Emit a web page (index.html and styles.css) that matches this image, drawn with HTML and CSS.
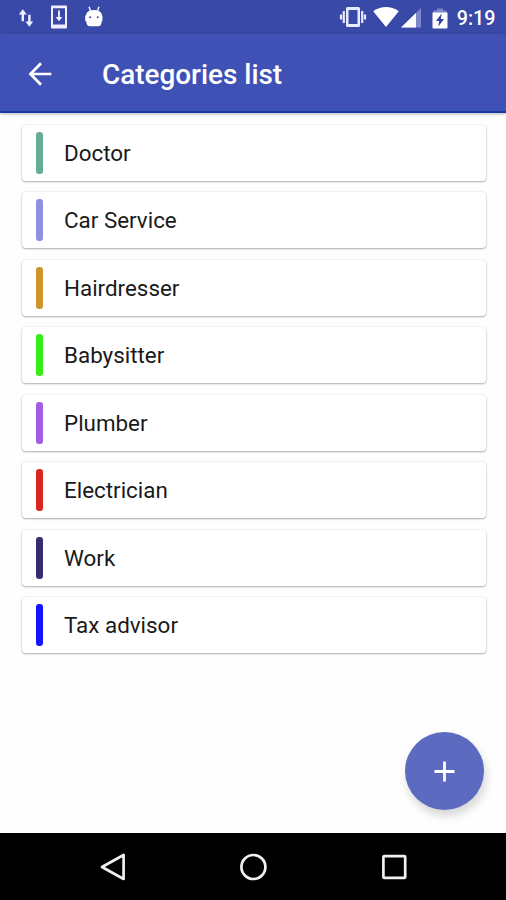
FILE: index.html
```html
<!DOCTYPE html>
<html lang="en">
  <head>
    <meta charset="utf-8">
    <meta name="viewport" content="width=device-width, initial-scale=1.0">
    <title>Categories list</title>
    <link rel="stylesheet" href="styles.css">
  </head>
  <body>

  <div class="screen">
      <div class="status-bar">
          <div class="status-left">
              <svg width="16" height="20" viewBox="0 0 16 20">
                  <path d="M0.8 6.4L4.8 1.2L8.8 6.4H6V13.2H3.6V6.4ZM7.4 13.6H10.2V6.8H12.6V13.6H15.2L11.4 18.8Z" fill="#eef0ff"/>
              </svg>
              <svg width="18" height="24" viewBox="0 0 18 24">
                  <path fill-rule="evenodd" d="M2 0.5H16Q17 0.5 17 1.5V22.5Q17 23.5 16 23.5H2Q1 23.5 1 22.5V1.5Q1 0.5 2 0.5ZM3 3.2V19.5H15V3.2Z" fill="#eef0ff"/>
                  <path d="M8.1 5.5H9.9V12H12.4L9 16.2L5.6 12H8.1Z" fill="#eef0ff"/>
              </svg>
              <svg width="20" height="22" viewBox="0 0 20 22">
                  <path d="M5 0.8L6.5 5M15 0.8L13.5 5" stroke="#fff" stroke-width="1.4"/>
                  <path d="M2 9.5Q2.5 4 10 4Q17.5 4 18 9.5H18.4V15H17.8Q17.6 20.3 14 20.3H6Q2.4 20.3 2.2 15H1.2V9.5Z" fill="#fff"/>
                  <circle cx="6.2" cy="11.2" r="1" fill="#3949ab"/>
                  <circle cx="13.8" cy="11.2" r="1" fill="#3949ab"/>
              </svg>
          </div>
          <div class="status-right">
              <svg class="vibrate" width="28" height="22" viewBox="0 0 28 22">
                  <path fill-rule="evenodd" d="M8.5 1H19.5Q21 1 21 2.5V19.5Q21 21 19.5 21H8.5Q7 21 7 19.5V2.5Q7 1 8.5 1ZM9.5 4V18H18.5V4Z" fill="#e8eaff"/>
                  <path d="M4.8 5V17M23.2 5V17M2 8.5V13.5M26 8.5V13.5" stroke="#e8eaff" stroke-width="2.2"/>
              </svg>
              <svg class="wifi" width="26" height="22" viewBox="0 0 26 22">
                  <path d="M0.2 5.2Q13 -3.2 25.8 5.2L13 21Z" fill="#fff"/>
              </svg>
              <svg class="signal" width="21" height="20" viewBox="0 0 21 20">
                  <path d="M0 19.5L20 0V19.5Z" fill="#fff" opacity=".35"/>
                  <path d="M0 19.5L15 4.9V19.5Z" fill="#fff"/>
              </svg>
              <svg class="battery" width="16" height="21" viewBox="0 0 16 21">
                  <path d="M5 0.5H11V2.5H14.5V6H1.5V2.5H5Z" fill="#fff" opacity=".35"/>
                  <path d="M0.5 4.5H15.5V19.5Q15.5 20.5 14.5 20.5H1.5Q0.5 20.5 0.5 19.5Z" fill="#fff"/>
                  <path d="M9.7 5.5L4 13H7.2L6.3 18.5L12 11H8.8Z" fill="#3040a0"/>
              </svg>
              <span class="clock">9:19</span>
          </div>
      </div>

      <div class="toolbar">
          <svg class="back" width="24" height="24" viewBox="0 0 24 24">
              <path d="M23.3 12H2.6M13 1.3L2.4 12L13 22.7" fill="none" stroke="#fff" stroke-width="2.7"/>
          </svg>
          <h1>Categories list</h1>
      </div>

      <div class="content">
          <div class="card"><span class="bar doctor"></span>Doctor</div>
          <div class="card"><span class="bar car"></span>Car Service</div>
          <div class="card"><span class="bar hair"></span>Hairdresser</div>
          <div class="card"><span class="bar baby"></span>Babysitter</div>
          <div class="card"><span class="bar plumber"></span>Plumber</div>
          <div class="card"><span class="bar electrician"></span>Electrician</div>
          <div class="card"><span class="bar work"></span>Work</div>
          <div class="card"><span class="bar tax"></span>Tax advisor</div>
      </div>

      <!-- floating add button -->
      <div class="fab">
          <svg width="21" height="21" viewBox="0 0 21 21">
              <path d="M10.5 0.5V20.5M0.5 10.5H20.5" stroke="#fff" stroke-width="2.8"/>
          </svg>
      </div>

      <div class="nav-bar">
          <svg width="28" height="30" viewBox="0 0 28 30">
              <path d="M24.6 3V27L3 15Z" fill="none" stroke="#f0f0f0" stroke-width="2.7" stroke-linejoin="round"/>
          </svg>
          <svg width="28" height="30" viewBox="0 0 28 30">
              <circle cx="14.4" cy="15" r="12" fill="none" stroke="#f0f0f0" stroke-width="2.7"/>
          </svg>
          <svg width="28" height="30" viewBox="0 0 28 30">
              <rect x="3.4" y="4.1" width="21.8" height="21.8" rx="1" fill="none" stroke="#f0f0f0" stroke-width="2.7"/>
          </svg>
      </div>
  </div>

  </body>
</html>
```
FILE: styles.css
```css
body {
    margin: 0;
    font-family: Roboto, "Liberation Sans", sans-serif;
    background-color: #fefefe;
}

svg {
    display: block;
    flex-shrink: 0;
}

.screen {
    position: relative;
    display: flex;
    flex-direction: column;
    width: 506px;
    height: 900px;
    overflow: hidden;
}

/* Status bar */
.status-bar {
    display: flex;
    justify-content: space-between;
    height: 34px;
    flex-shrink: 0;
    box-sizing: border-box;
    padding: 0 10.5px 0 18px;
    background-color: #3949a8;
}

.status-left, .status-right {
    display: flex;
    align-items: center;
}

.status-left {
    gap: 16px;
}

.status-left svg:first-child {
    margin-top: 1px;
}

.wifi {
    margin-left: 6px;
}

.signal {
    margin: 2px 0 0 2px;
}

.battery {
    margin: 2px 0 0 9.5px;
}

.clock {
    margin: 2px 0 0 9px;
    font-size: 19.7px;
    font-weight: 500;
    color: #fff;
}

/* Toolbar */
.toolbar {
    display: flex;
    align-items: center;
    height: 79px;
    flex-shrink: 0;
    box-sizing: border-box;
    padding-left: 28px;
    background-color: #3f51b5;
    border-bottom: 2px solid #1c3aa3;
    box-shadow: 0 1px 3px rgba(0,0,0,0.3);
}

.back {
    margin-top: 2px;
}

h1 {
    margin: 3px 0 0 50px;
    font-size: 27.9px;
    font-weight: 500;
    color: #fff;
}

/* Category cards */
.content {
    display: flex;
    flex-direction: column;
    gap: 11.5px;
    flex-grow: 1;
    padding: 11.5px 20px 0 22px;
}

.card {
    display: flex;
    align-items: center;
    height: 56px;
    box-sizing: border-box;
    padding-left: 14px;
    background-color: #fff;
    border-radius: 4px;
    box-shadow: 0 1px 2px rgba(0,0,0,0.3), 0 0 2px rgba(0,0,0,0.12);
    font-size: 22.4px;
    color: #1a1a1a;
}

.bar {
    width: 7px;
    height: 42px;
    margin-right: 21px;
    border-radius: 3px;
}

.doctor { background-color: #66ad96; }
.car { background-color: #8e90e2; }
.hair { background-color: #d0942c; }
.baby { background-color: #35ee15; }
.plumber { background-color: #a25ee0; }
.electrician { background-color: #d9261f; }
.work { background-color: #382c70; }
.tax { background-color: #1414ff; }

.fab {
    position: absolute;
    right: 22px;
    bottom: 90px;
    display: flex;
    align-items: center;
    justify-content: center;
    width: 79px;
    height: 78px;
    border-radius: 50%;
    background-color: #5c6bc0;
    box-shadow: 2px 6px 10px rgba(0,0,0,0.16);
}

/* Android navigation */
.nav-bar {
    display: flex;
    align-items: center;
    justify-content: center;
    gap: 112.5px;
    height: 67px;
    flex-shrink: 0;
    background-color: #000;
}
```
